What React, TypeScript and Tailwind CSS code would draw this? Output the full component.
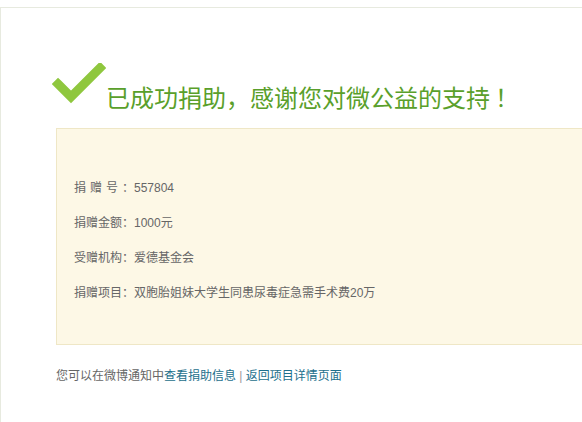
const rows: { label: string; value: string; spaced?: boolean }[] = [
  { label: "捐赠号", value: "557804", spaced: true },
  { label: "捐赠金额", value: "1000元" },
  { label: "受赠机构", value: "爱德基金会" },
  { label: "捐赠项目", value: "双胞胎姐妹大学生同患尿毒症急需手术费20万" },
];

function CheckMark() {
  return (
    <svg width="54" height="44" viewBox="0 0 54 44" className="shrink-0">
      <polyline
        points="6,21 19,34 48,5"
        fill="none"
        stroke="#8fc73e"
        strokeWidth="9"
        strokeLinecap="square"
        strokeLinejoin="miter"
      />
    </svg>
  );
}

export default function App() {
  return (
    <div
      className="h-[422px] w-[582px] overflow-hidden bg-white pt-[7px]"
      style={{ fontFamily: '"Liberation Sans", "Noto Sans CJK SC", sans-serif' }}
    >
      <div className="h-full border-l border-t border-[#e7eadf]">
        <div className="ml-[51px] mt-[55px] flex items-end">
          <CheckMark />
          <h1
            className="mb-[-6px] ml-0 whitespace-nowrap text-[24px] leading-[32px] text-[#5a9f2b]"
            style={{ fontFamily: '"Noto Sans CJK SC", sans-serif' }}
          >
            已成功捐助，感谢您对微公益的支持<span className="ml-[5px]">！</span>
          </h1>
        </div>

        <div className="ml-[55px] mt-[21px] box-border h-[217px] w-[560px] border border-[#efe7c6] bg-[#fdf8e6] pl-[17px] pt-[41px]">
          {rows.map((r) => (
            <div key={r.label} className="flex h-[35px] items-center whitespace-nowrap text-[12px] text-[#666]">
              <span className="w-[60px] shrink-0 whitespace-nowrap">
                {r.spaced ? <span className="tracking-[4px]">{r.label}</span> : r.label}：
              </span>
              <span>{r.value}</span>
            </div>
          ))}
        </div>

        <p className="ml-[55px] mt-[21px] whitespace-nowrap text-[12px] leading-[20px] text-[#666]">
          您可以在微博通知中
          <a className="text-[#1d6f8c]">查看捐助信息</a>
          <span className="text-[#999]"> | </span>
          <a className="text-[#1d6f8c]">返回项目详情页面</a>
        </p>
      </div>
    </div>
  );
}
